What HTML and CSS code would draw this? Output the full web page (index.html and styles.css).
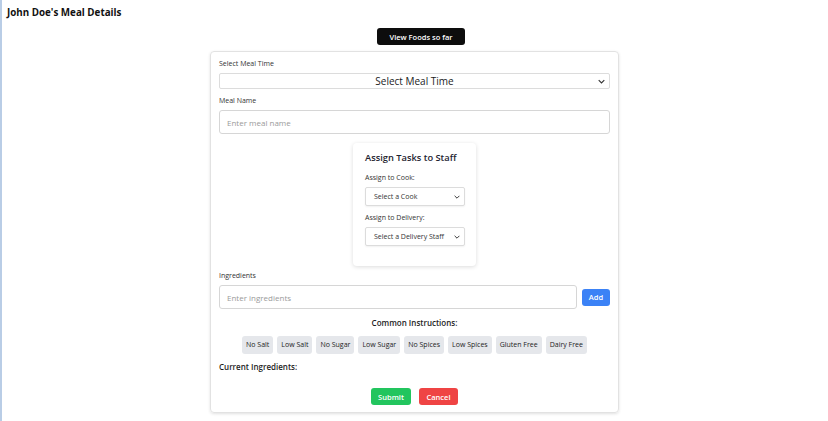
FILE: index.html
```html
<!DOCTYPE html>
<html>
<head>
<meta charset="utf-8">
<link rel="stylesheet" href="styles.css">
</head>
<body>
<div class="page">
  <h1 class="title">John Doe's Meal Details</h1>
  <div class="top-actions">
    <button class="btn btn-dark">View Foods so far</button>
  </div>
  <div class="card">
    <label class="label">Select Meal Time</label>
    <div class="select select-big">
      <span class="select-text">Select Meal Time</span>
      <svg class="chev" viewBox="0 0 10 6" width="7" height="5"><path d="M1 1l4 4 4-4" fill="none" stroke="#333" stroke-width="1.6"/></svg>
    </div>
    <label class="label">Meal Name</label>
    <div class="input">Enter meal name</div>

    <div class="staff-wrap">
      <div class="staff">
        <h2 class="staff-title">Assign Tasks to Staff</h2>
        <label class="label small">Assign to Cook:</label>
        <div class="select select-small">
          <span>Select a Cook</span>
          <svg class="chev" viewBox="0 0 10 6" width="6" height="4"><path d="M1 1l4 4 4-4" fill="none" stroke="#333" stroke-width="1.6"/></svg>
        </div>
        <label class="label small">Assign to Delivery:</label>
        <div class="select select-small">
          <span>Select a Delivery Staff</span>
          <svg class="chev" viewBox="0 0 10 6" width="6" height="4"><path d="M1 1l4 4 4-4" fill="none" stroke="#333" stroke-width="1.6"/></svg>
        </div>
      </div>
    </div>

    <label class="label">Ingredients</label>
    <div class="ing-row">
      <div class="input grow">Enter ingredients</div>
      <button class="btn btn-blue">Add</button>
    </div>

    <h3 class="section-title center">Common Instructions:</h3>
    <div class="chips">
      <span class="chip">No Salt</span>
      <span class="chip">Low Salt</span>
      <span class="chip">No Sugar</span>
      <span class="chip">Low Sugar</span>
      <span class="chip">No Spices</span>
      <span class="chip">Low Spices</span>
      <span class="chip">Gluten Free</span>
      <span class="chip">Dairy Free</span>
    </div>
    <h3 class="section-title">Current Ingredients:</h3>
    <div class="actions">
      <button class="btn btn-green">Submit</button>
      <button class="btn btn-red">Cancel</button>
    </div>
  </div>
</div>
</body>
</html>
```

FILE: styles.css
```css
* { box-sizing: border-box; }
html, body { margin: 0; padding: 0; background: #fff; }
body {
  font-family: "Open Sans", "Noto Sans", sans-serif;
  color: #1f2328;
}
.page {
  border-left: 2px solid #b9cde6;
  min-height: 421px;
  padding: 6px 0 0 5px;
}
.title {
  margin: 0;
  font-size: 9.8px;
  font-weight: 700;
  line-height: 14px;
  color: #111;
}
.top-actions {
  display: flex;
  justify-content: center;
  padding-left: 7px;
  margin-top: 8px;
}
.btn {
  border: none;
  font-family: inherit;
  font-weight: 600;
  color: #fff;
  border-radius: 3px;
  cursor: pointer;
}
.btn-dark {
  background: #0d0d0d;
  font-size: 7.5px;
  height: 17px;
  width: 88px;
  padding: 0;
}
.card {
  width: 409px;
  margin: 6px 0 0 203px;
  border: 1px solid #e2e2e2;
  border-radius: 4px;
  box-shadow: 0 1px 3px rgba(0,0,0,0.12);
  padding: 7px 8px 7px 8px;
}
.label {
  display: block;
  font-size: 7px;
  color: #333;
  line-height: 10px;
  margin-bottom: 4px;
}
.label.small { font-size: 7px; }
.select {
  display: flex;
  align-items: center;
  border: 1px solid #dcdcdc;
  border-radius: 2px;
  background: #fff;
  position: relative;
}
.select-big {
  height: 16px;
  justify-content: center;
  margin-bottom: 7px;
  font-size: 10px;
  color: #222;
}
.select-big .chev { position: absolute; right: 4px; top: 5px; }
.select-small {
  height: 19px;
  width: 100px;
  font-size: 7px;
  color: #333;
  justify-content: space-between;
  padding: 0 4px 0 8px;
  margin-bottom: 7px;
  box-shadow: 0 1px 2px rgba(0,0,0,0.06);
}
.input {
  height: 24px;
  border: 1px solid #d6d6d6;
  border-radius: 3px;
  display: flex;
  align-items: center;
  padding-left: 7px;
  font-size: 8px;
  color: #9a9a9a;
}
.grow { flex: 1; }
.staff-wrap {
  display: flex;
  justify-content: center;
  margin: 9px 0 5px 0;
}
.staff {
  width: 123px;
  padding: 8px 10px 13px 12px;
  border-radius: 4px;
  box-shadow: 0 1px 4px rgba(0,0,0,0.14);
}
.staff-title {
  margin: 0 0 8px 0;
  font-size: 9.3px;
  font-weight: 600;
  line-height: 14px;
  white-space: nowrap;
  color: #1e2330;
}
.ing-row {
  display: flex;
  align-items: center;
  gap: 5px;
}
.btn-blue {
  background: #3b82f6;
  font-size: 7.5px;
  height: 17px;
  width: 28px;
  padding: 0;
}
.section-title {
  margin: 8px 0 0 0;
  font-size: 8px;
  font-weight: 600;
  line-height: 12px;
  color: #1d1d1d;
}
.center { text-align: center; }
.chips {
  display: flex;
  justify-content: center;
  gap: 4px;
  margin-top: 7px;
}
.chip {
  background: #e5e7eb;
  border-radius: 3px;
  font-size: 7px;
  font-weight: 500;
  line-height: 18px;
  padding: 0 4px;
  color: #222;
}
.chips + .section-title { margin-top: 7px; }
.actions {
  display: flex;
  justify-content: center;
  gap: 8px;
  margin-top: 15px;
}
.btn-green { background: #22c55e; font-size: 7.5px; height: 17px; width: 40px; padding: 0; }
.btn-red { background: #ef4444; font-size: 7.5px; height: 17px; width: 39px; padding: 0; }
```
